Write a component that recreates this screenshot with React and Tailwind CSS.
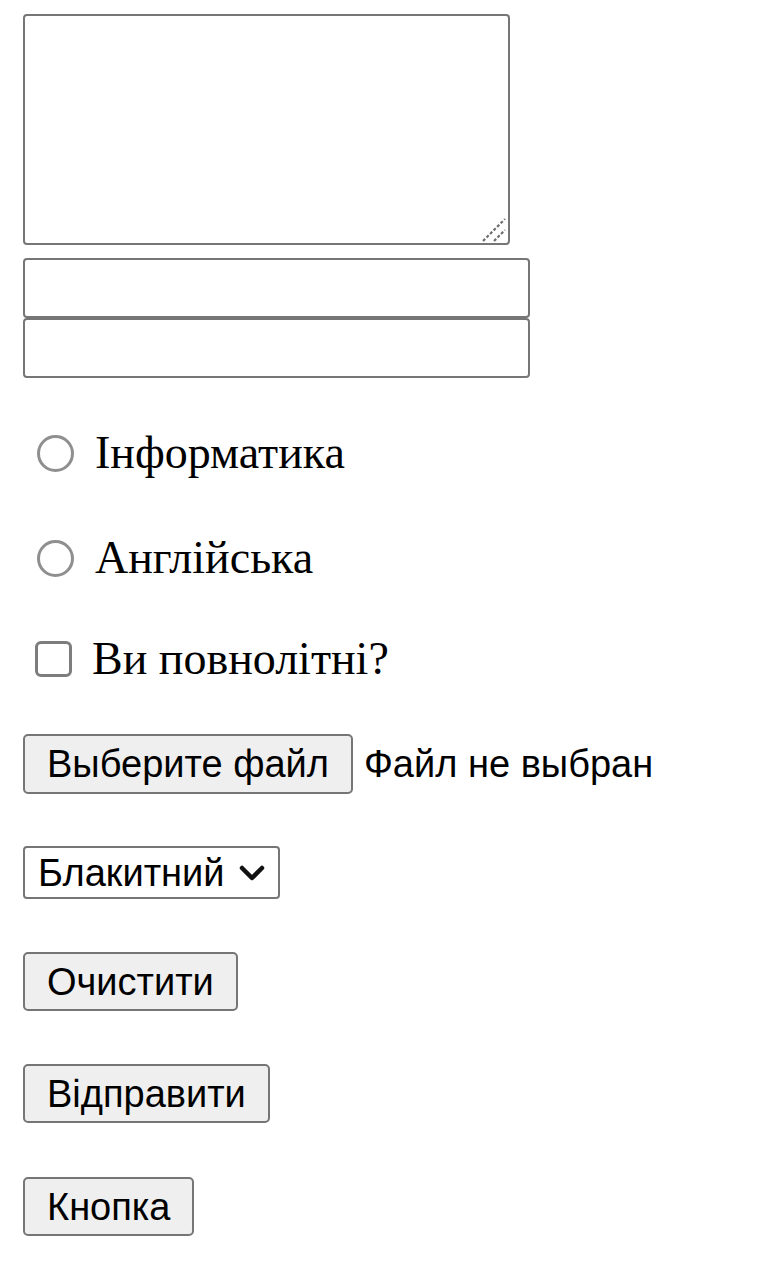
import React from 'react';

// simple form mock, zoomed-in look
const serif = { fontFamily: '"Liberation Serif", "Times New Roman", serif' };

const GrayButton = ({ children, className = '' }) => (
    <button
        type="button"
        className={`h-[59px] px-[22px] bg-[#efefef] border-2 border-[#767676] rounded-[5px] text-[38px] leading-none text-black font-['Liberation_Sans',Arial,sans-serif] ${className}`}
    >
        {children}
    </button>
);

const App = () => {
    return (
        <div className="min-h-[1280px] bg-white pl-[23px] pt-[14px] pb-10 flex flex-col items-start text-black font-['Liberation_Sans',Arial,sans-serif]">
            {/* textarea */}
            <div className="relative">
                <textarea className="block w-[487px] h-[231px] border-2 border-[#767676] rounded-[4px] resize-none outline-none bg-white" />
                <svg className="absolute right-[4px] bottom-[3px]" width="26" height="26" viewBox="0 0 26 26">
                    <line x1="3" y1="25" x2="25" y2="3" stroke="#6f6f6f" strokeWidth="2.2" strokeDasharray="3 2" />
                    <line x1="14" y1="25" x2="25" y2="14" stroke="#6f6f6f" strokeWidth="2.2" strokeDasharray="3 2" />
                </svg>
            </div>

            {/* inputs */}
            <input type="text" className="block mt-[13px] w-[507px] h-[60px] border-2 border-[#767676] rounded-[4px] outline-none" />
            <input type="text" className="block w-[507px] h-[60px] border-2 border-[#767676] rounded-[4px] outline-none" />

            {/* radios */}
            <label className="mt-[45px] h-[60px] flex items-center" style={serif}>
                <span className="ml-[14px] w-[37px] h-[37px] rounded-full border-[3px] border-[#8f8f8f] bg-white" />
                <span className="ml-[21px] text-[46px] leading-none">Інформатика</span>
            </label>
            <label className="mt-[45px] h-[60px] flex items-center" style={serif}>
                <span className="ml-[14px] w-[37px] h-[37px] rounded-full border-[3px] border-[#8f8f8f] bg-white" />
                <span className="ml-[21px] text-[46px] leading-none">Англійська</span>
            </label>

            {/* checkbox */}
            <label className="mt-[41px] h-[60px] flex items-center" style={serif}>
                <span className="ml-[12px] w-[37px] h-[36px] rounded-[6px] border-[3px] border-[#7d7d7d] bg-white" />
                <span className="ml-[20px] text-[46px] leading-none">Ви повнолітні?</span>
            </label>

            {/* file */}
            <div className="mt-[45px] flex items-center">
                <GrayButton className="h-[60px] px-[22px]">Выберите файл</GrayButton>
                <span className="ml-[11px] text-[38px] leading-none">Файл не выбран</span>
            </div>

            {/* select */}
            <div className="mt-[52px] h-[53px] w-[257px] border-2 border-[#767676] rounded-[4px] bg-white flex items-center pl-[13px] pr-[12px] justify-between">
                <span className="text-[38px] leading-none">Блакитний</span>
                <svg width="28" height="20" viewBox="0 0 28 20">
                    <polyline points="4,5 14,15 24,5" fill="none" stroke="#111" strokeWidth="4.5" strokeLinecap="round" strokeLinejoin="round" />
                </svg>
            </div>

            {/* buttons */}
            <GrayButton className="mt-[53px]">Очистити</GrayButton>
            <GrayButton className="mt-[53px] h-[58px]">Відправити</GrayButton>
            <GrayButton className="mt-[54px] h-[58px]">Кнопка</GrayButton>
        </div>
    );
};

export default App;
